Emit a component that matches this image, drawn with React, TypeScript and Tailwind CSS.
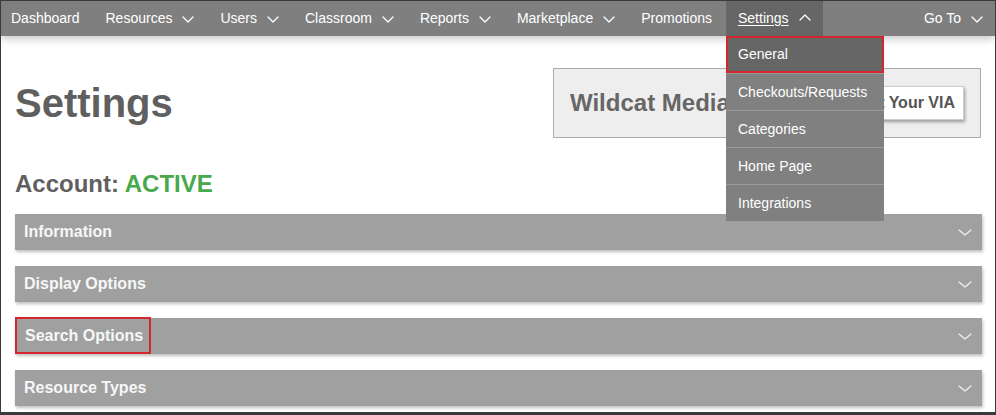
import clsx from "clsx";

const navItems = [
  { label: "Dashboard", caret: false },
  { label: "Resources", caret: true },
  { label: "Users", caret: true },
  { label: "Classroom", caret: true },
  { label: "Reports", caret: true },
  { label: "Marketplace", caret: true },
  { label: "Promotions", caret: false },
];

const menuItems = ["General", "Checkouts/Requests", "Categories", "Home Page", "Integrations"];

const sections = ["Information", "Display Options", "Search Options", "Resource Types"];

function Caret({ up = false, className }: { up?: boolean; className?: string }) {
  return (
    <svg width="12" height="7" viewBox="0 0 12 7" fill="none" className={className}>
      <polyline
        points={up ? "1,6 6,1 11,6" : "1,1 6,6 11,1"}
        stroke="currentColor"
        strokeWidth="1.3"
        strokeLinecap="round"
        strokeLinejoin="round"
      />
    </svg>
  );
}

export default function App() {
  return (
    <div
      className="relative h-[415px] w-[996px] overflow-hidden border border-b-[3px] border-[#3a3a3a] bg-white text-[#5f5f5f]"
      style={{ fontFamily: '"Liberation Sans", Arial, sans-serif' }}
    >
      <nav className="relative z-10 flex h-[35px] items-stretch gap-[2px] bg-[#7f7f7f] text-[14px] text-white shadow-[0_3px_8px_rgba(0,0,0,0.22)]">
        {navItems.map((item, i) => (
          <div key={item.label} className={clsx("flex items-center pr-3", i === 0 ? "pl-[10px]" : "pl-3")}>
            <span>{item.label}</span>
            {item.caret && <Caret className="ml-[10px] mt-px" />}
          </div>
        ))}
        <div className="flex items-center bg-[#666666] px-3">
          <span className="underline underline-offset-2">Settings</span>
          <Caret up className="ml-[10px] -mt-0.5" />
        </div>
        <div className="ml-auto flex items-center px-3">
          <span>Go To</span>
          <Caret className="ml-[10px] mt-px" />
        </div>
      </nav>

      <div className="absolute left-[725px] top-[35px] z-20 w-[158px] text-[14px] text-white">
        {menuItems.map((label, i) => (
          <div
            key={label}
            className={clsx(
              "flex h-[37px] items-center pl-3",
              i === 0
                ? "bg-[#666666] ring-2 ring-inset ring-[#d3262d]"
                : "border-t border-[#9a9a9a] bg-[#808080]",
            )}
          >
            {label}
          </div>
        ))}
      </div>

      <main className="pl-[14px] pr-[13px]">
        <div className="flex items-center justify-between pt-[32px]">
          <h1 className="text-[40px] leading-none font-bold">Settings</h1>
          <div className="mr-px flex h-[70px] w-[428px] items-center justify-between border border-[#aaaaaa] bg-[#eeeeee] pl-4 pr-4">
            <span className="text-[24px] font-bold text-[#666666]">Wildcat Media</span>
            <button
              type="button"
              className="h-[34px] border border-[#cccccc] bg-white pl-[10px] pr-[8px] text-[16px] font-bold text-[#555555] shadow-[1px_2px_3px_rgba(0,0,0,0.35)]"
            >
              Visit Your VIA
            </button>
          </div>
        </div>

        <h2 className="mt-[34px] text-[24px] leading-none font-bold">
          Account: <span className="text-[#47a84c]">ACTIVE</span>
        </h2>

        <div className="mt-[18px] flex flex-col gap-4">
          {sections.map((label) => (
            <div
              key={label}
              className="relative flex h-[36px] items-center justify-between bg-[#a0a0a0] pl-[9px] pr-[10px] text-[16px] font-bold text-[#f7f7f7] shadow-[1px_2px_3px_rgba(0,0,0,0.25)]"
            >
              <span className={clsx(label === "Search Options" && "pl-px")}>{label}</span>
              <svg width="14" height="7" viewBox="0 0 14 7" fill="none">
                <polyline points="1,1 7,6 13,1" stroke="#f2f2f2" strokeWidth="1.2" strokeLinecap="round" strokeLinejoin="round" />
              </svg>
              {label === "Search Options" && (
                <span className="absolute -top-px left-0 h-[37px] w-[136px] border-2 border-[#d3262d]" />
              )}
            </div>
          ))}
        </div>
      </main>
    </div>
  );
}
